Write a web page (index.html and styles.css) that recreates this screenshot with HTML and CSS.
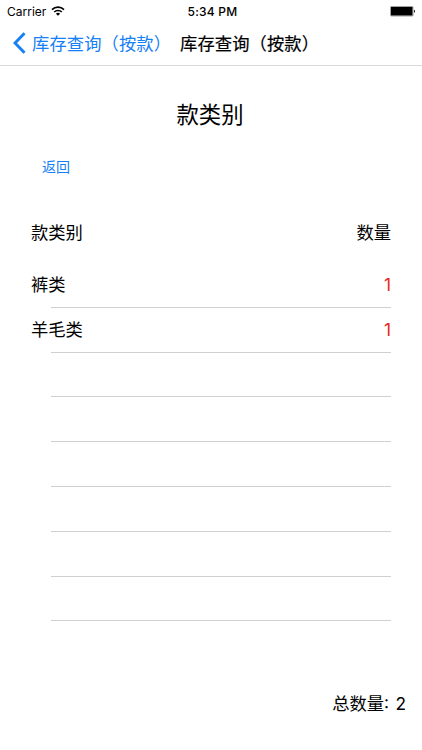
FILE: index.html
```html
<!DOCTYPE html>
<html lang="zh-CN">
<head>
<meta charset="utf-8">
<title>库存查询（按款）</title>
<link rel="stylesheet" href="styles.css">
</head>
<body>
<div class="screen">
  <header class="top">
    <div class="status">
      <div class="carrier">
        <span>Carrier</span>
        <svg class="wifi" viewBox="0 0 14 10" width="14" height="10">
          <path d="M1 3.6a8.6 8.6 0 0 1 12 0" fill="none" stroke="#000" stroke-width="1.7"/>
          <path d="M3.2 6a5.4 5.4 0 0 1 7.6 0" fill="none" stroke="#000" stroke-width="1.6"/>
          <path d="M4.9 7.7a3 3 0 0 1 4.2 0L7 9.8z"/>
        </svg>
      </div>
      <div class="time">5:34 PM</div>
      <svg class="battery" viewBox="0 0 26 11" width="26" height="11">
        <rect x=".5" y=".5" width="22.5" height="9.5" rx=".7" fill="none" stroke="#777" stroke-width=".7"/>
        <rect x="1" y="1" width="21.5" height="8.5"/>
        <path d="M24 3.7c1.3.3 1.3 2.8 0 3.1z"/>
      </svg>
    </div>
    <nav class="nav">
      <a class="nav-back">
        <svg viewBox="0 0 13 22" width="13" height="22"><path d="M11.5 1.2L2 11l9.500 9.800" fill="none" stroke="#1680f5" stroke-width="3"/></svg>
        <span>库存查询（按款）</span>
      </a>
      <h1 class="nav-title">库存查询（按款）</h1>
    </nav>
  </header>
  <main class="content">
    <h2 class="heading">款类别</h2>
    <a class="return">返回</a>
    <div class="row head"><span>款类别</span><span>数量</span></div>
    <ul class="list">
      <li class="row"><span>裤类</span><span class="count">1</span></li>
      <li class="row"><span>羊毛类</span><span class="count">1</span></li>
      <li class="row"></li>
      <li class="row"></li>
      <li class="row"></li>
      <li class="row"></li>
      <li class="row"></li>
      <li class="row"></li>
    </ul>
  </main>
  <footer class="total">总数量: 2</footer>
</div>
</body>
</html>
```
FILE: styles.css
```css
* { box-sizing: border-box; }

body {
  margin: 0;
  background: #fff;
  color: #000;
  font-family: Inter, "Noto Sans CJK SC", sans-serif;
  font-size: 17.3px;
}

.screen {
  width: 422px;
  height: 750px;
  overflow: hidden;
}

.top {
  height: 66px;
  border-bottom: 1px solid #d9d9d9;
}

.status {
  display: grid;
  grid-template-columns: 1fr auto 1fr;
  align-items: center;
  height: 22px;
  padding: 0 6px 0 7px;
  font-size: 12px;
}

.carrier {
  display: flex;
  align-items: center;
  gap: 5px;
}

.wifi { margin-top: -1px; }

.time {
  padding-left: 2px;
  font-size: 12px;
  font-weight: 500;
  letter-spacing: .25px;
}

.battery { justify-self: end; }

.nav {
  display: flex;
  align-items: center;
  height: 42px;
  padding-left: 13px;
  font-family: "Noto Sans CJK SC", sans-serif;
  letter-spacing: .1px;
}

.nav-back {
  display: flex;
  align-items: center;
  gap: 6px;
  width: 167px;
  color: #1680f5;
  white-space: nowrap;
}

.nav-title {
  margin: 0;
  font-size: 17.3px;
  font-weight: 400;
  -webkit-text-stroke: .2px #000;
  white-space: nowrap;
}

.nav-title,
.nav-back span { margin-top: -1px; }

.heading {
  margin: 33px 0 0;
  padding-right: 2px;
  font-size: 22.4px;
  font-weight: 400;
  line-height: 32px;
  text-align: center;
}

.return {
  display: block;
  margin: 26px 0 0 42px;
  color: #1680f5;
  font-size: 14px;
  line-height: 20px;
}

.row {
  display: flex;
  align-items: center;
  justify-content: space-between;
  height: 44.8px;
  padding: 0 31px 2px;
}

.head { margin-top: 33px; }

.list {
  margin: 8.300px 0 0;
  padding: 0;
  list-style: none;
}

.list .row {
  padding-bottom: 3px;
  background: linear-gradient(#d0d0d0, #d0d0d0) 51px 100% / 340px 1px no-repeat;
}

.count { 
  margin-top: 2px;
  color: #e8281a;
}

.total {
  margin-top: 70px;
  padding-right: 16px;
  line-height: 26px;
  text-align: right;
  word-spacing: 1.5px;
}
```
